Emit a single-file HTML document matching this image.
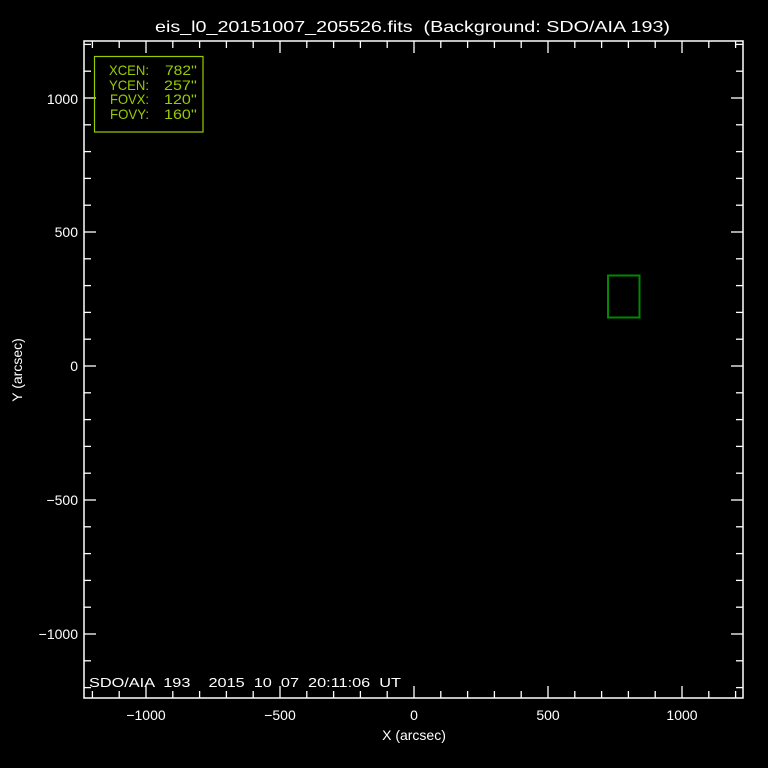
<!DOCTYPE html>
<html><head><meta charset="utf-8"><style>
html,body{margin:0;padding:0;background:#000;width:768px;height:768px;overflow:hidden}
svg{display:block}
text{font-family:"Liberation Sans","DejaVu Sans",sans-serif;fill:#fff;white-space:pre}
</style></head><body>
<svg width="768" height="768" viewBox="0 0 768 768" xmlns="http://www.w3.org/2000/svg">
<rect width="768" height="768" fill="#000"/>
<text x="155" y="32" font-size="16" textLength="515" lengthAdjust="spacingAndGlyphs">eis_l0_20151007_205526.fits  (Background: SDO/AIA 193)</text>
<rect x="84" y="41" width="659" height="657" fill="none" stroke="#fff" stroke-width="1.5"/>
<g stroke="#fff" stroke-width="1.3" id="ticks"></g>
<g font-size="14" text-anchor="end">
<text x="78" y="104">1000</text>
<text x="78" y="237">500</text>
<text x="78" y="371">0</text>
<text x="78" y="505">−500</text>
<text x="78" y="639">−1000</text>
</g>
<g font-size="14" text-anchor="middle">
<text x="146" y="720">−1000</text>
<text x="280" y="720">−500</text>
<text x="414" y="720">0</text>
<text x="548" y="720">500</text>
<text x="682" y="720">1000</text>
<text x="414" y="740">X (arcsec)</text>
</g>
<text transform="translate(22,370) rotate(-90)" font-size="14" text-anchor="middle">Y (arcsec)</text>
<text x="89" y="687" font-size="13" textLength="312" lengthAdjust="spacingAndGlyphs">SDO/AIA  193    2015  10  07  20:11:06  UT</text>
<rect x="94.5" y="56.5" width="108.5" height="75.5" fill="none" stroke="#99cc00" stroke-width="1.2"/>
<g font-size="14">
<text x="109" y="75" style="fill:#99cc00" textLength="40" lengthAdjust="spacingAndGlyphs">XCEN:</text><text x="165" y="75" style="fill:#99cc00" textLength="32" lengthAdjust="spacingAndGlyphs">782''</text>
<text x="109" y="90" style="fill:#99cc00" textLength="40" lengthAdjust="spacingAndGlyphs">YCEN:</text><text x="164" y="90" style="fill:#99cc00" textLength="33" lengthAdjust="spacingAndGlyphs">257''</text>
<text x="110" y="104" style="fill:#99cc00" textLength="39" lengthAdjust="spacingAndGlyphs">FOVX:</text><text x="164" y="104" style="fill:#99cc00" textLength="33" lengthAdjust="spacingAndGlyphs">120''</text>
<text x="110" y="119" style="fill:#99cc00" textLength="39" lengthAdjust="spacingAndGlyphs">FOVY:</text><text x="164" y="119" style="fill:#99cc00" textLength="33" lengthAdjust="spacingAndGlyphs">160''</text>
</g>
<rect x="608" y="275.5" width="31.5" height="42" fill="none" stroke="#008800" stroke-width="2"/>
</svg>
<script>
var g=document.getElementById('ticks'),s='';
for(var v=-1200;v<=1200;v+=100){
 var maj=(v%500===0), L=maj?12:7;
 var x=414+v*0.268, y=366-v*0.268;
 s+='<line x1="'+x+'" y1="698" x2="'+x+'" y2="'+(698-L)+'"/>';
 s+='<line x1="'+x+'" y1="41" x2="'+x+'" y2="'+(41+L)+'"/>';
 s+='<line x1="84" y1="'+y+'" x2="'+(84+L)+'" y2="'+y+'"/>';
 s+='<line x1="743" y1="'+y+'" x2="'+(743-L)+'" y2="'+y+'"/>';
}
g.innerHTML=s;
</script>
</body></html>
